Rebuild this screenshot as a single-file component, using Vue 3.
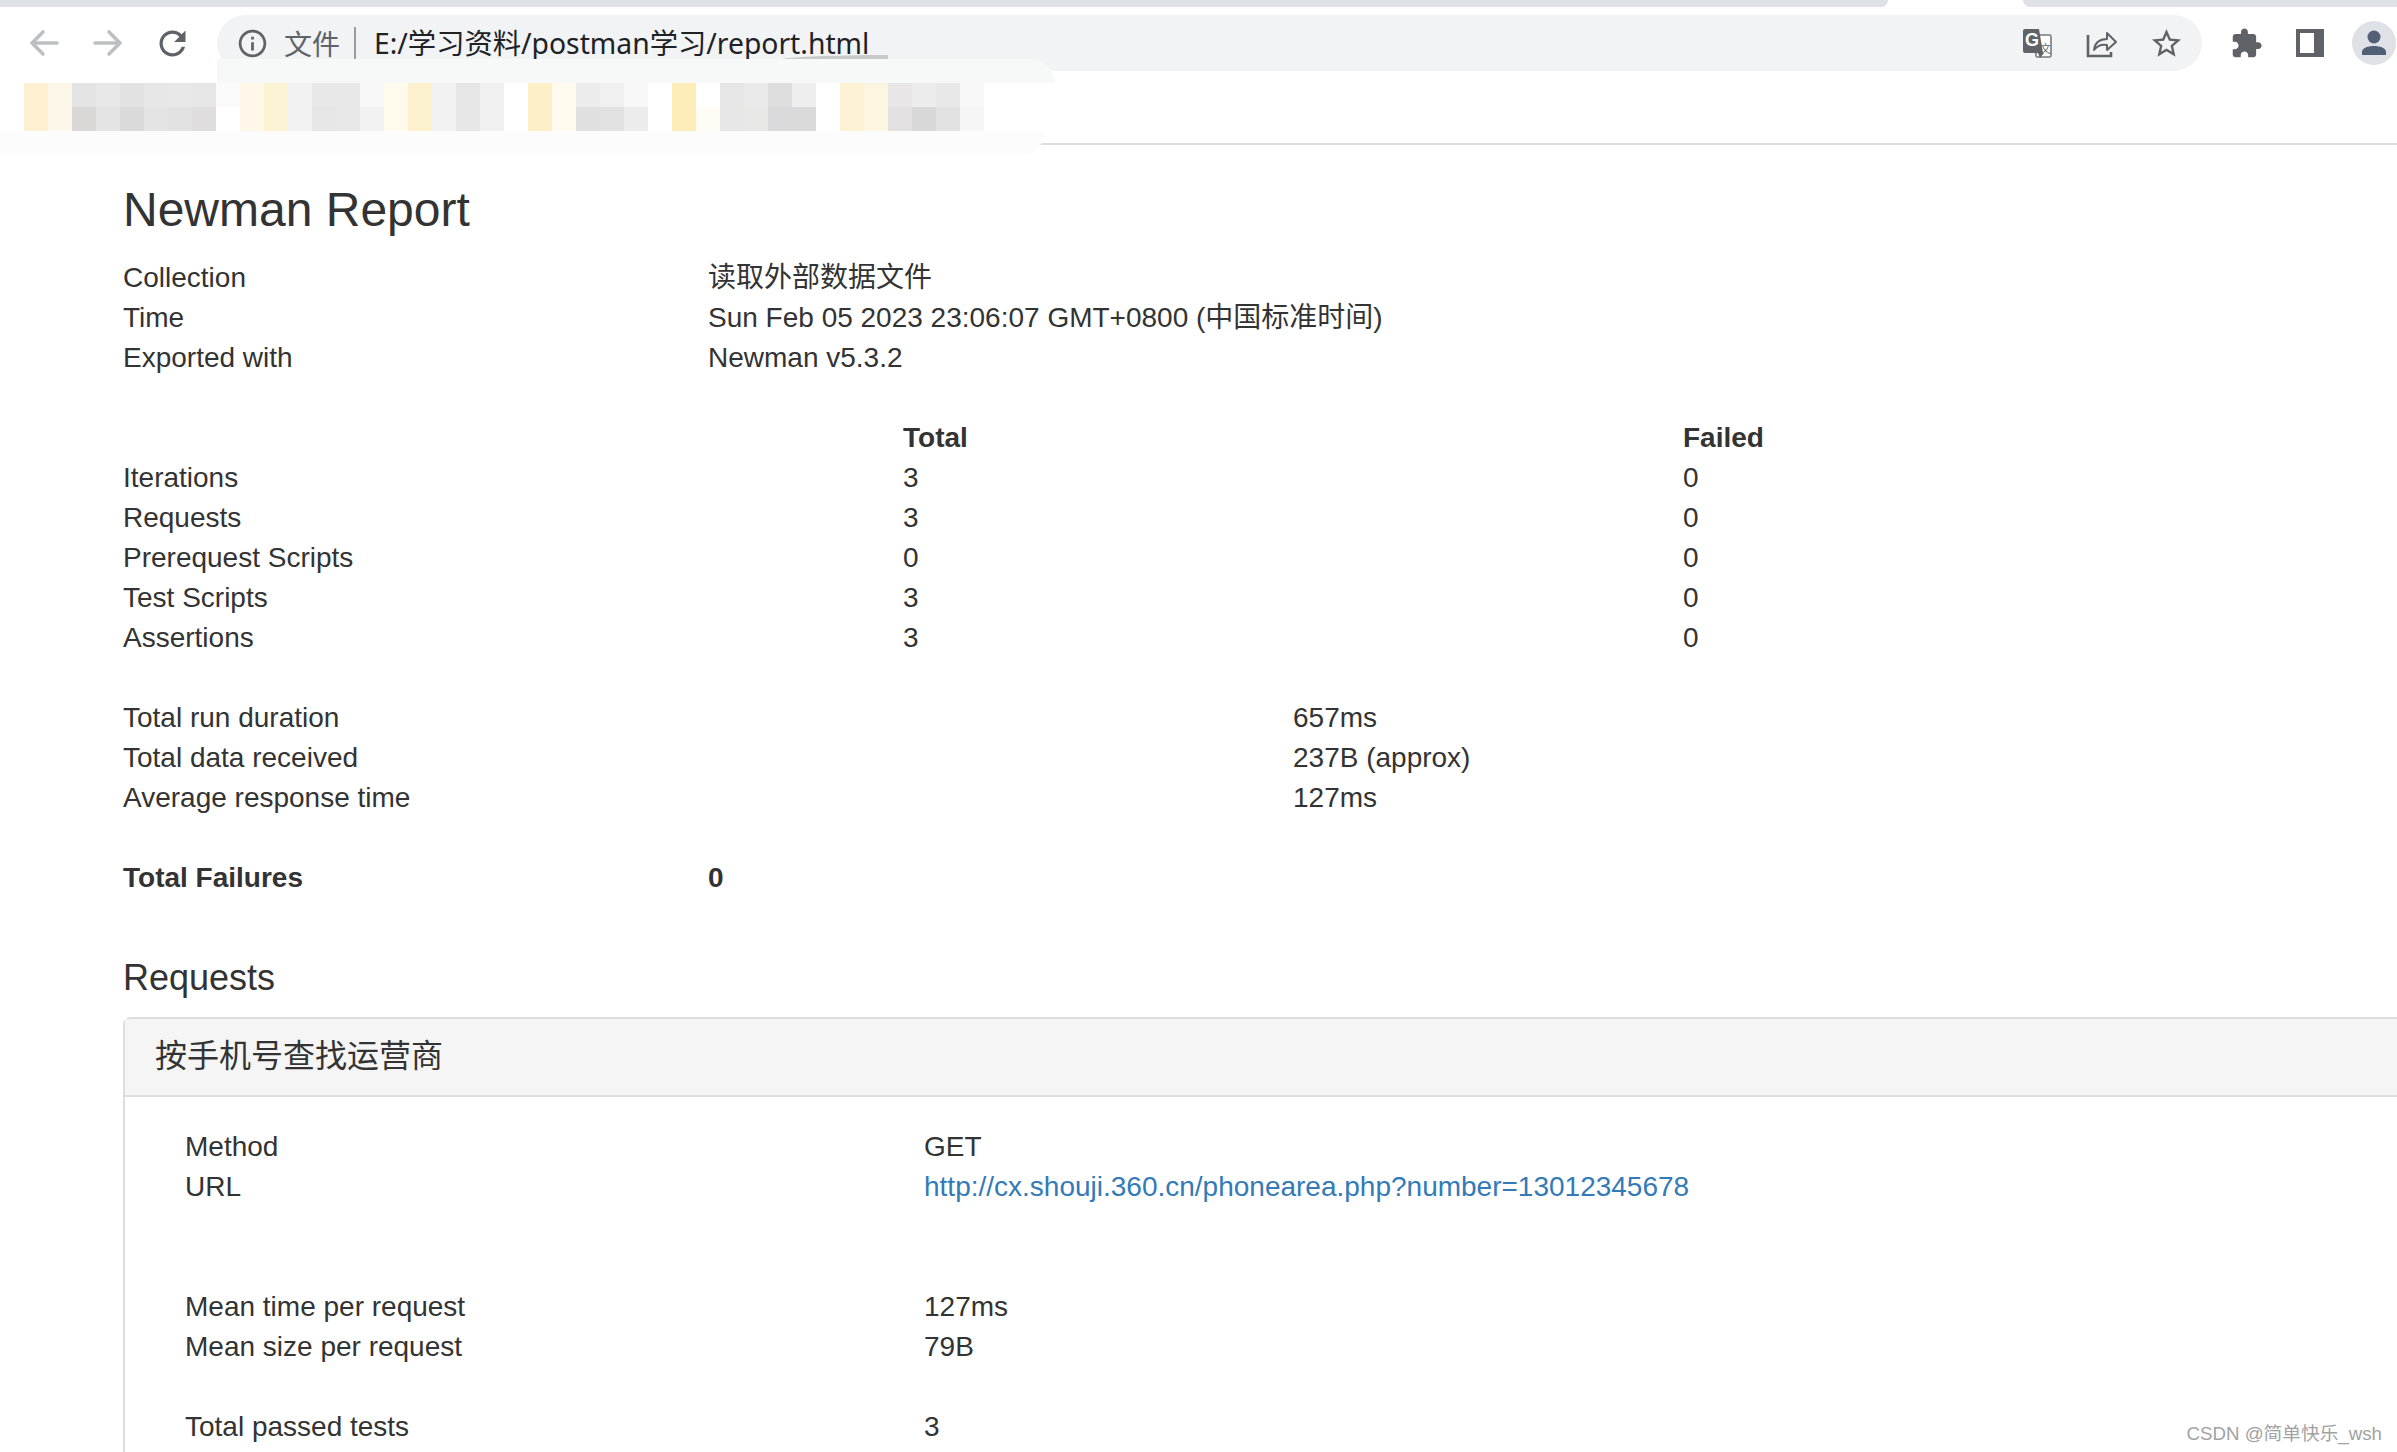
<script setup>
const overview = [
  ['Collection', '读取外部数据文件'],
  ['Time', 'Sun Feb 05 2023 23:06:07 GMT+0800 (中国标准时间)'],
  ['Exported with', 'Newman v5.3.2']
]

const stats = [
  ['Iterations', 3, 0],
  ['Requests', 3, 0],
  ['Prerequest Scripts', 0, 0],
  ['Test Scripts', 3, 0],
  ['Assertions', 3, 0]
]

const timings = [
  ['Total run duration', '657ms'],
  ['Total data received', '237B (approx)'],
  ['Average response time', '127ms']
]

// top / bottom colour of each blurred bookmark column
const mosaic = [
  ['#fdf0d0', '#fdf0d0'], ['#fcf7e8', '#fcf7e8'], ['#e4e4e4', '#d9d8d6'], ['#e8e8e8', '#e4e4e4'],
  ['#e2e2e2', '#dadada'], ['#e7e7e7', '#e4e4e4'], ['#e8e8e8', '#e2e2e2'], ['#e6e6e6', '#dfdddd'],
  ['#fafafa', '#ffffff'], ['#fff8e8', '#fff8e8'], ['#fcf2d4', '#fcf2d4'], ['#f2f2f2', '#f2f2f2'],
  ['#e8e8e8', '#e6e6e6'], ['#e8e8e8', '#e8e8e8'], ['#f8f8f8', '#f2f2f2'], ['#fffbec', '#fffbec'],
  ['#fdf0cc', '#fdf0cc'], ['#f2f2f2', '#f2f2f2'], ['#e6e6e6', '#e6e6e6'], ['#f0f0f0', '#f0f0f0'],
  ['#ffffff', '#ffffff'], ['#fdf0c8', '#fdf0c8'], ['#fff9ee', '#fff9ee'], ['#ececec', '#e0e0e0'],
  ['#f0f0f0', '#e2e2e2'], ['#f8f8f8', '#ececec'], ['#ffffff', '#ffffff'], ['#fdecb8', '#fdecb8'],
  ['#ffffff', '#fffcf6'], ['#e6e6e6', '#e6e6e6'], ['#eaeaea', '#e8e8e6'], ['#dedede', '#dadadc'],
  ['#eeeeee', '#dadada'], ['#ffffff', '#ffffff'], ['#fdf2d4', '#fdf2d4'], ['#fcf5e0', '#fcf5e0'],
  ['#e8e6e6', '#e2e0e0'], ['#ececec', '#d8d8d8'], ['#e8e8e8', '#e2e2e2'], ['#f8f8f8', '#f6f6f6']
]
</script>

<template>
  <div class="screen">
    <header class="chrome">
      <div class="tab-strip">
        <span class="tab-left"></span>
        <span class="tab-right"></span>
      </div>

      <div class="toolbar">
        <button class="tool">
          <svg width="30" height="28" viewBox="0 0 30 28" class="stroke-light">
            <path d="M28 14H3M14 3 3 14l11 11" />
          </svg>
        </button>
        <button class="tool">
          <svg width="30" height="28" viewBox="0 0 30 28" class="stroke-light">
            <path d="M2 14h25M16 3l11 11-11 11" />
          </svg>
        </button>
        <button class="tool">
          <svg width="39" height="39" viewBox="0 0 24 24" fill="#5f6368">
            <path d="M17.65 6.35C16.2 4.9 14.21 4 12 4c-4.42 0-7.99 3.58-7.99 8s3.57 8 7.99 8c3.73 0 6.84-2.55 7.73-6h-2.08c-.82 2.33-3.04 4-5.65 4-3.31 0-6-2.69-6-6s2.69-6 6-6c1.66 0 3.14.69 4.22 1.78L13 11h7V4l-2.35 2.35z" />
          </svg>
        </button>

        <div class="omnibox">
          <svg class="info" width="33" height="33" viewBox="0 0 24 24" fill="#5f6368">
            <path d="M11 7h2v2h-2zm0 4h2v6h-2zm1-9C6.48 2 2 6.48 2 12s4.48 10 10 10 10-4.48 10-10S17.52 2 12 2zm0 18c-4.41 0-8-3.59-8-8s3.59-8 8-8 8 3.59 8 8-3.59 8-8 8z" />
          </svg>
          <span class="scheme">文件</span>
          <span class="divider"></span>
          <span class="address">E:/学习资料/postman学习/report.html</span>

          <div class="omni-actions">
            <button class="tool">
              <svg width="30" height="30" viewBox="0 0 30 30">
                <rect x="13" y="7" width="15" height="22" rx="1.5" fill="#fff" stroke="#77797c" stroke-width="1.6" />
                <path d="M2 1h14l4 24H2a2 2 0 0 1-2-2V3a2 2 0 0 1 2-2z" fill="#5f6368" />
                <path d="M15 25l2 5 4-5z" fill="#5f6368" />
                <text x="2" y="18" class="glyph-g">G</text>
                <text x="17" y="25" class="glyph-wen">文</text>
              </svg>
            </button>
            <button class="tool">
              <svg width="32" height="30" viewBox="0 0 32 30" fill="none" stroke="#5f6368">
                <path d="M2 7v21h23v-4" stroke-width="2.6" />
                <path d="M8 22c1-8 6-11 13-11V5l9 9-9 8v-5c-6-1-10 1-13 5z" stroke-width="2" stroke-linejoin="round" />
              </svg>
            </button>
            <button class="tool">
              <svg width="35" height="35" viewBox="0 0 24 24" fill="#5f6368">
                <path d="M22 9.24l-7.19-.62L12 2 9.19 8.63 2 9.24l5.46 4.73L5.82 21 12 17.27 18.18 21l-1.63-7.03L22 9.24zM12 15.4l-3.76 2.27 1-4.28-3.32-2.88 4.38-.38L12 6.1l1.71 4.04 4.38.38-3.32 2.88 1 4.28L12 15.4z" />
              </svg>
            </button>
          </div>
        </div>

        <div class="browser-actions">
          <button class="tool">
            <svg width="33" height="33" viewBox="0 0 24 24" fill="#5f6368">
              <path d="M20.5 11H19V7c0-1.1-.9-2-2-2h-4V3.5C13 2.12 11.88 1 10.5 1S8 2.12 8 3.5V5H4c-1.1 0-1.99.9-1.99 2v3.8H3.5c1.49 0 2.7 1.21 2.7 2.7s-1.21 2.7-2.7 2.7H2V20c0 1.1.9 2 2 2h3.8v-1.5c0-1.49 1.21-2.7 2.7-2.7 1.49 0 2.7 1.21 2.7 2.7V22H17c1.1 0 2-.9 2-2v-4h1.5c1.38 0 2.5-1.12 2.5-2.5S21.88 11 20.5 11z" />
            </svg>
          </button>
          <button class="tool">
            <svg width="28" height="28" viewBox="0 0 28 28">
              <rect width="28" height="28" fill="#5f6368" />
              <rect x="4" y="4" width="14" height="20" fill="#fff" />
            </svg>
          </button>
          <button class="tool">
            <svg width="44" height="44" viewBox="0 0 44 44">
              <circle cx="22" cy="22" r="22" fill="#dee1e6" />
              <circle cx="22" cy="16" r="6.5" fill="#525f76" />
              <path d="M10 34v-3c0-4 6-6 12-6s12 2 12 6v3z" fill="#525f76" />
            </svg>
          </button>
        </div>
      </div>

      <div class="bookmarks">
        <div class="mosaic">
          <div v-for="(cell, i) in mosaic" :key="i" class="mosaic-col">
            <span :style="{ background: cell[0] }"></span>
            <span :style="{ background: cell[1] }"></span>
          </div>
        </div>
      </div>

      <!-- smudges left by the redaction, over the toolbar and bookmarks -->
      <span class="smudge-streak"></span>
      <span class="smudge-top"></span>
      <span class="smudge-bottom"></span>
    </header>

    <main class="report">
      <h3 class="report-title">Newman Report</h3>

      <section class="block">
        <div v-for="row in overview" :key="row[0]" class="row">
          <div class="col-3">{{ row[0] }}</div>
          <div class="col-9">{{ row[1] }}</div>
        </div>
      </section>

      <section class="block">
        <div class="row strong">
          <div class="col-4"></div>
          <div class="col-4">Total</div>
          <div class="col-4">Failed</div>
        </div>
        <div v-for="row in stats" :key="row[0]" class="row">
          <div class="col-4">{{ row[0] }}</div>
          <div class="col-4">{{ row[1] }}</div>
          <div class="col-4">{{ row[2] }}</div>
        </div>
      </section>

      <section class="block">
        <div v-for="row in timings" :key="row[0]" class="row">
          <div class="col-6">{{ row[0] }}</div>
          <div class="col-6">{{ row[1] }}</div>
        </div>
      </section>

      <section class="block">
        <div class="row strong">
          <div class="col-3">Total Failures</div>
          <div class="col-9">0</div>
        </div>
      </section>

      <h4 class="section-title">Requests</h4>

      <div class="panel">
        <div class="panel-heading">按手机号查找运营商</div>
        <div class="panel-body">
          <div class="detail">
            <div>Method</div>
            <div>GET</div>
            <div>URL</div>
            <a href="#">http://cx.shouji.360.cn/phonearea.php?number=13012345678</a>
          </div>
          <div class="detail gap-double">
            <div>Mean time per request</div>
            <div>127ms</div>
            <div>Mean size per request</div>
            <div>79B</div>
          </div>
          <div class="detail gap-single">
            <div>Total passed tests</div>
            <div>3</div>
          </div>
        </div>
      </div>
    </main>

    <span class="watermark">CSDN @简单快乐_wsh</span>
  </div>
</template>

<style>
html,
body {
  margin: 0;
  background: #fff;
}
</style>

<style scoped>
.screen {
  position: relative;
  width: 2397px;
  height: 1452px;
  overflow: hidden;
  background: #fff;
  color: #333;
  font-family: "Liberation Sans", "Noto Sans CJK SC", sans-serif;
  font-size: 28px;
  line-height: 40px;
}

.chrome {
  position: relative;
}

.tab-strip {
  display: flex;
  justify-content: space-between;
  height: 7px;
}

.tab-left {
  width: 1888px;
  background: #dee1e6;
  border-bottom-right-radius: 7px;
}

.tab-right {
  width: 374px;
  background: #dee1e6;
  border-bottom-left-radius: 7px;
}

.toolbar {
  display: flex;
  align-items: center;
  height: 56px;
  margin-top: 8px;
  padding-left: 12px;
}

.tool {
  display: flex;
  align-items: center;
  justify-content: center;
  flex: none;
  width: 64px;
  height: 56px;
  padding: 0;
  border: 0;
  background: none;
}

.stroke-light {
  fill: none;
  stroke: #bdbfc1;
  stroke-width: 3.6;
  stroke-linecap: round;
  stroke-linejoin: round;
}

.omnibox {
  display: flex;
  flex: none;
  align-items: center;
  width: 1985px;
  height: 56px;
  margin-left: 13px;
  padding-left: 19px;
  box-sizing: border-box;
  border-radius: 28px;
  background: #f1f3f4;
}

.info {
  flex: none;
}

.scheme {
  margin-left: 15px;
  color: #5f6368;
  font-family: "Noto Sans CJK SC", sans-serif;
  font-size: 28px;
}

.divider {
  width: 2px;
  height: 32px;
  margin: 0 18px 0 14px;
  background: #9a9c9f;
}

.address {
  color: #202124;
  font-family: "Noto Sans", "Noto Sans CJK SC", sans-serif;
  font-size: 28.3px;
  white-space: nowrap;
}

.omni-actions {
  display: flex;
  margin-left: auto;
  padding-right: 4px;
}

.glyph-g {
  fill: #fff;
  font-family: "Liberation Sans", sans-serif;
  font-size: 18px;
  font-weight: 700;
}

.glyph-wen {
  fill: #5f6368;
  font-family: "Noto Sans CJK SC", sans-serif;
  font-size: 11px;
}

.browser-actions {
  display: flex;
  flex: none;
  margin-left: 12px;
}

.bookmarks {
  box-sizing: border-box;
  height: 74px;
  padding: 12px 0 0 24px;
  border-bottom: 2px solid #dadce0;
}

.mosaic {
  display: flex;
}

.mosaic-col {
  display: flex;
  flex-direction: column;
  width: 24px;
}

.mosaic-col span {
  height: 24px;
}

.smudge-streak {
  position: absolute;
  top: 55px;
  left: 780px;
  width: 108px;
  height: 5px;
  border-top-left-radius: 100% 100%;
  background: #c9cacc;
}

.smudge-top {
  position: absolute;
  top: 59px;
  left: 217px;
  width: 838px;
  height: 24px;
  border-top-right-radius: 24px;
  background: #f7f9f9;
}

.smudge-bottom {
  position: absolute;
  top: 131px;
  left: 0;
  width: 1045px;
  height: 24px;
  border-bottom-right-radius: 24px;
  background: #fcfcfc;
}

.report {
  width: 2340px;
  padding: 38px 0 0 123px;
}

.report-title {
  margin: 0 0 22px;
  font-size: 48px;
  font-weight: 400;
  line-height: 53px;
}

.block + .block {
  margin-top: 40px;
}

.row {
  display: grid;
  grid-template-columns: repeat(12, 1fr);
}

.col-3 {
  grid-column: span 3;
}

.col-4 {
  grid-column: span 4;
}

.col-6 {
  grid-column: span 6;
}

.col-9 {
  grid-column: span 9;
}

.strong {
  font-weight: 700;
}

.section-title {
  margin: 60px 0 19px;
  font-size: 36px;
  font-weight: 400;
  line-height: 40px;
}

.panel {
  border: 2px solid #ddd;
  border-radius: 8px;
}

.panel-heading {
  padding: 19px 30px 21px;
  border-bottom: 2px solid #ddd;
  background: #f5f5f5;
  font-size: 32px;
  line-height: 36px;
}

.panel-body {
  padding: 30px 60px;
}

.detail {
  display: grid;
  grid-template-columns: 739px 1fr;
}

.detail a {
  color: #337ab7;
  text-decoration: none;
}

.gap-double {
  margin-top: 80px;
}

.gap-single {
  margin-top: 40px;
}

.watermark {
  position: absolute;
  right: 15px;
  bottom: 4px;
  color: #a2a2a2;
  font-size: 18.7px;
  line-height: 28px;
}
</style>
